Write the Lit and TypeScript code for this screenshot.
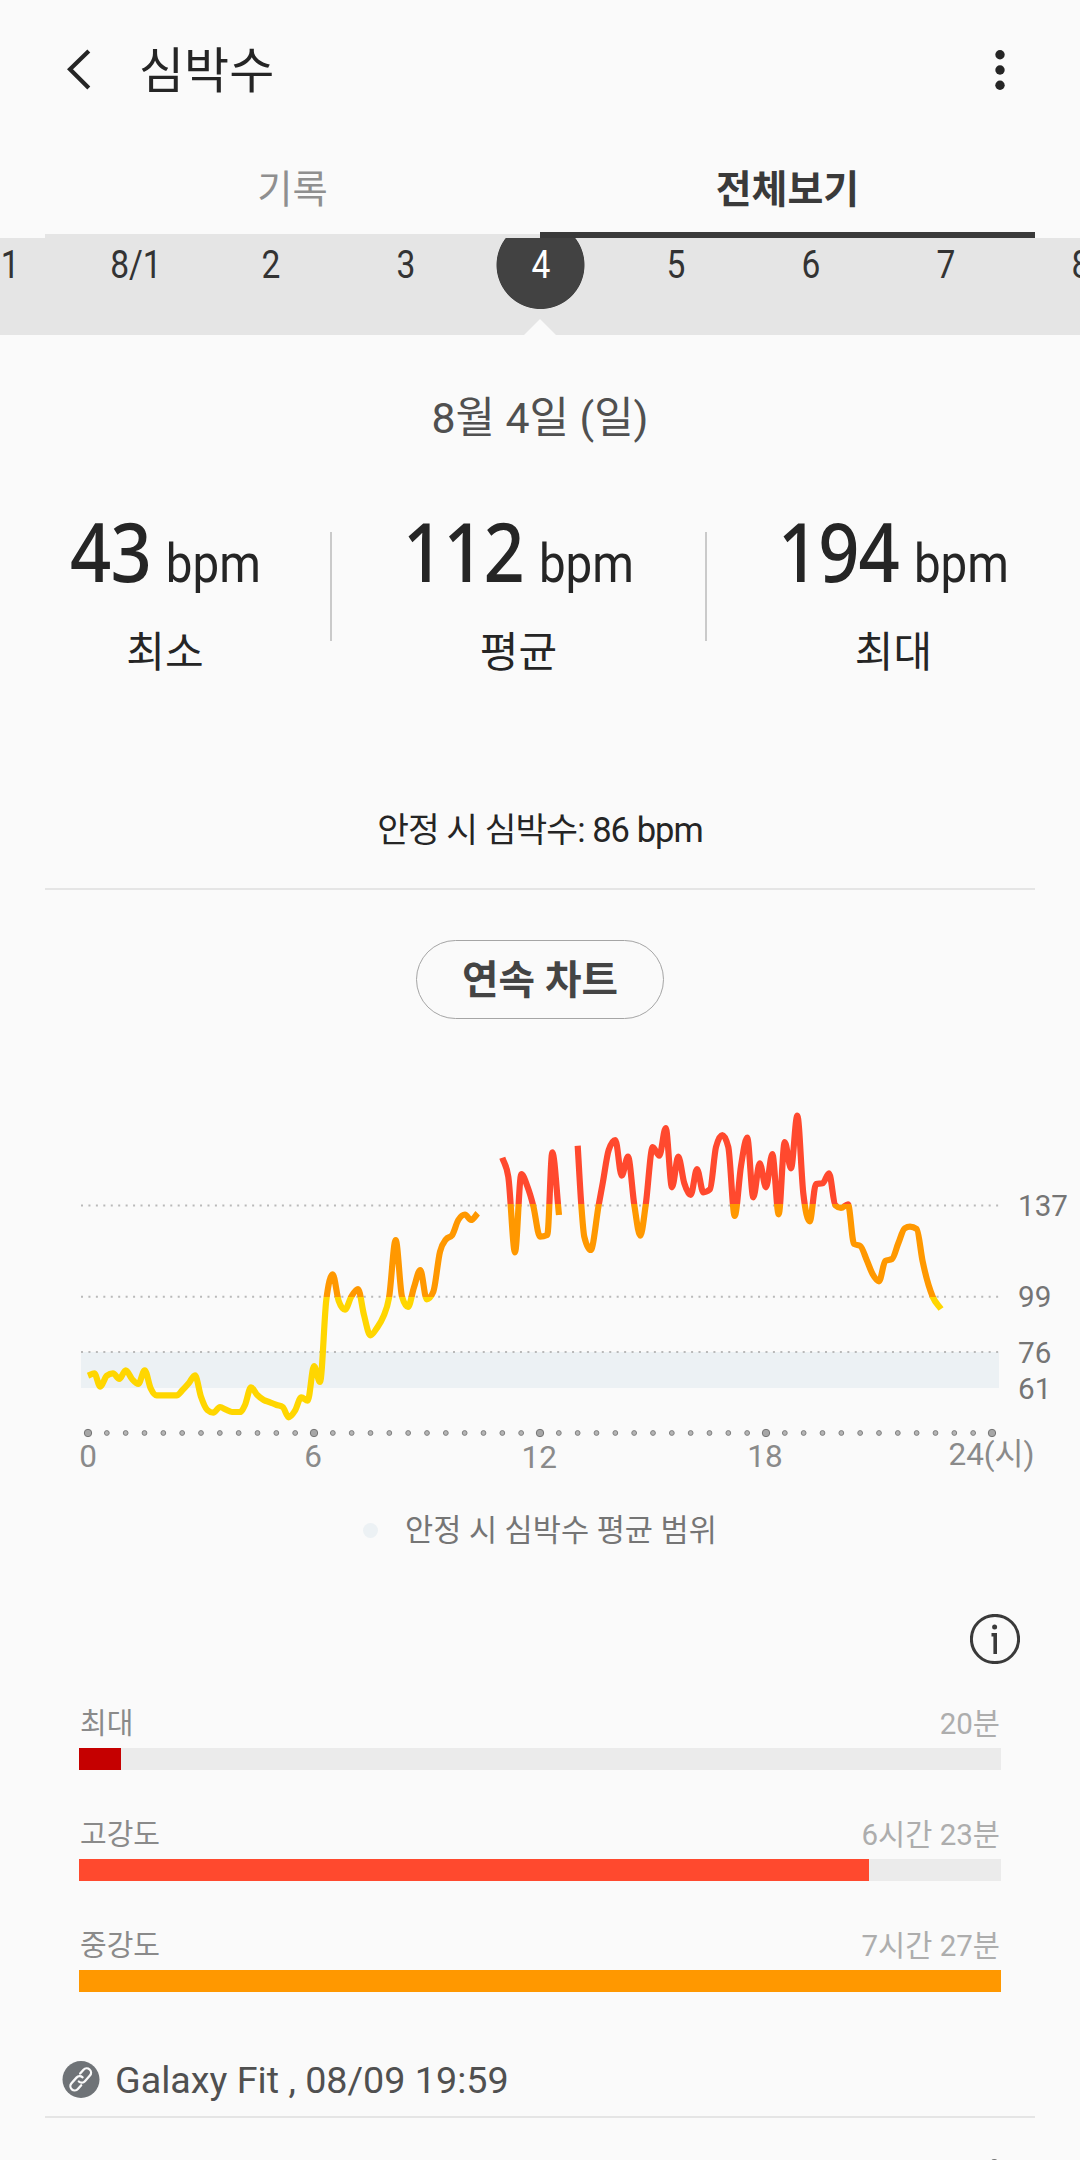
import { LitElement, html, css, svg } from "lit";
import { customElement, property } from "lit/decorators.js";
import { classMap } from "lit/directives/class-map.js";
import { styleMap } from "lit/directives/style-map.js";

type Point = [number, number];

/* Samples in chart units: x across the view, y measured down from the top of the plot. */
const NIGHT_AND_MORNING: Point[] = [
  [88, 295.7], [94.3, 293.3], [100.3, 306.7], [106.7, 295.7], [113, 293.3], [119.3, 299], [125.7, 290.3],
  [132, 299], [138.3, 304], [144.7, 290.3], [150.7, 308.3], [156.7, 315.3], [176.7, 315.3], [182.3, 310.3],
  [188.7, 303.3], [195, 295.3], [201, 316.7], [207.3, 330], [213.3, 332.7], [220, 327], [226, 329.7],
  [232, 332], [240, 332], [245, 325], [251, 307.3], [257.3, 315], [263.7, 320], [270, 322.3], [276.7, 325],
  [282.7, 327], [288.7, 337.3], [295, 330.7], [301.3, 317.3], [307.7, 320.7], [314, 286], [320, 302],
  [326.3, 220], [332.7, 194.3], [338.7, 221], [345, 229.7], [351.3, 216.7], [358, 209], [364, 235],
  [370.3, 255.3], [376.7, 248.3], [383.3, 236.7], [389, 218], [395.7, 160], [402, 216.7], [408, 227],
  [414, 207.3], [420.3, 190], [426.7, 219.3], [433.3, 211.7], [440, 171.7], [446, 159.3], [452, 155.3],
  [458.3, 140], [465, 134.5], [471, 140], [477.7, 133.3],
];
const LATE_MORNING: Point[] = [
  [502.3, 77.7], [508.3, 96.7], [515, 172.3], [521.3, 94], [527.7, 107.3], [533.3, 126], [540, 156.7],
  [547.3, 155], [552.3, 72.3], [559, 135],
];
const AFTERNOON: Point[] = [
  [577.7, 65.7], [581.3, 125], [584.3, 156.7], [590.7, 170], [598.7, 125], [602.7, 103.3], [608.7, 70],
  [615.3, 60], [621.7, 95.7], [628, 76.7], [634.3, 125], [640.3, 155.7], [645.7, 125], [652.7, 67],
  [659.3, 75.7], [665.7, 48], [672, 107.3], [678.3, 76.7], [684.3, 103.3], [690.7, 115], [697, 89],
  [703.3, 112.3], [710, 109.3], [716, 67], [722.3, 55], [728.3, 67], [734.7, 136], [741, 86], [747.2, 57.7],
  [753.3, 117.3], [759.7, 83.3], [766, 107.3], [772.3, 74], [778.7, 134.3], [784.7, 62], [791, 88.3],
  [797.3, 35.7], [803.3, 113.3], [809.7, 141.3], [816, 104], [822.7, 103.3], [829, 93.3], [835.3, 125.3],
  [841, 128], [848, 124.3], [854, 164], [860.3, 166], [866.7, 180], [872.7, 194.3], [879, 201.3],
  [885.3, 181], [892, 179], [898.3, 163.3], [904.7, 148.3], [910, 146.7], [916.7, 149], [922.7, 181.7],
  [932.7, 216.7], [941, 229],
];

/** Monotone cubic curve through the samples, so peaks and troughs never overshoot. */
function curve(p: Point[]): string {
  const n = p.length;
  const slope = p.slice(1).map((q, i) => (q[1] - p[i][1]) / (q[0] - p[i][0]));
  const tan = p.map((_, i) => {
    if (i === 0) return slope[0];
    if (i === n - 1) return slope[n - 2];
    const a = slope[i - 1];
    const b = slope[i];
    if (a * b <= 0) return 0;
    const h0 = p[i][0] - p[i - 1][0];
    const h1 = p[i + 1][0] - p[i][0];
    const m = Math.abs((a * h1 + b * h0) / (h0 + h1));
    return Math.sign(a) * Math.min(m, 2 * Math.abs(a), 2 * Math.abs(b));
  });
  let d = `M${p[0][0]} ${p[0][1]}`;
  for (let i = 1; i < n; i++) {
    const h = (p[i][0] - p[i - 1][0]) / 3;
    d += `C${(p[i - 1][0] + h).toFixed(2)} ${(p[i - 1][1] + h * tan[i - 1]).toFixed(2)} ${(p[i][0] - h).toFixed(2)} ${(p[i][1] - h * tan[i]).toFixed(2)} ${p[i][0]} ${p[i][1]}`;
  }
  return d;
}

const FONT = css`Roboto, "Noto Sans CJK KR", sans-serif`;

@customElement("heart-chart")
class HeartChart extends LitElement {
  static styles = css`
    :host { display: block; }
    .plot { display: block; width: 1080px; height: 400px; font-family: ${FONT}; }
    .grid { stroke: #b9b9b9; stroke-width: 2; stroke-dasharray: 2 5.44; }
    .level { font-size: 29.6px; fill: #757575; }
    .hour { font-size: 31.5px; fill: #8a8a8a; text-anchor: middle; }
    .trace { fill: none; stroke: url(#zones); stroke-width: 6.2; stroke-linejoin: round; }
    .tick { fill: #b4b4b4; stroke: #808080; stroke-width: 1; }
    .major { fill: #a6a6a6; stroke: #757575; }
  `;

  render() {
    const levels: [string, number][] = [["137", 136], ["99", 227], ["76", 283], ["61", 319]];
    const hours: [string, number, number][] = [
      ["0", 88, 387], ["6", 313, 387], ["12", 539.3, 387.5], ["18", 765, 387], ["24(시)", 991.5, 385],
    ];
    const ticks = Array.from({ length: 49 }, (_, i) => i);
    return html`
      <svg class="plot" viewBox="0 0 1080 400">
        <defs>
          <linearGradient id="zones" gradientUnits="userSpaceOnUse" x1="0" y1="0" x2="0" y2="400">
            <stop offset="0.31" stop-color="#ff492e" />
            <stop offset="0.31" stop-color="#ff9800" />
            <stop offset="0.5437" stop-color="#ff9800" />
            <stop offset="0.5437" stop-color="#ffd600" />
          </linearGradient>
        </defs>
        <rect x="81" y="272" width="918" height="36" fill="#ecf1f4" />
        ${[125.5, 216.7, 272].map((y) => svg`<line class="grid" x1="81" x2="999" y1=${y} y2=${y} />`)}
        ${levels.map(([t, y]) => svg`<text class="level" x="1018" y=${y}>${t}</text>`)}
        ${[NIGHT_AND_MORNING, LATE_MORNING, AFTERNOON].map((s) => svg`<path class="trace" d=${curve(s)} />`)}
        ${ticks.map((i) => svg`<circle class=${i % 12 ? "tick" : "tick major"} cx=${88 + i * 18.833} cy="353" r=${i % 12 ? 2.4 : 3.7} />`)}
        ${hours.map(([t, x, y]) => svg`<text class="hour" x=${x} y=${y}>${t}</text>`)}
      </svg>
    `;
  }
}

@customElement("zone-bar")
class ZoneBar extends LitElement {
  @property() label = "";
  @property() time = "";
  @property() color = "";
  @property({ type: Number }) percent = 0;

  static styles = css`
    :host { display: block; }
    .caption { display: flex; justify-content: space-between; height: 40px; line-height: 41px; font-size: 29px; color: #8a8a8a; padding: 0 1px; }
    .time { color: #adadad; font-size: 29.5px; line-height: 40px; }
    .track { height: 22px; margin-top: 4px; background: #ebebeb; }
    .fill { height: 22px; }
  `;

  render() {
    return html`
      <div class="caption"><span>${this.label}</span><span class="time">${this.time}</span></div>
      <div class="track">
        <div class="fill" style=${styleMap({ width: `${this.percent}%`, background: this.color })}></div>
      </div>
    `;
  }
}

@customElement("app-root")
class AppRoot extends LitElement {
  static styles = css`
    :host { display: block; width: 1080px; height: 2160px; overflow: hidden; background: #fafafa; color: #252525; font-family: ${FONT}; }
    * { box-sizing: border-box; }
    .header { display: flex; align-items: center; height: 138px; padding: 0 71px 0 60px; }
    .header svg { display: block; }
    .title { flex: 1; padding: 6px 0 0 39px; font-size: 49px; line-height: 60px; }
    .tabs { display: flex; height: 100px; margin: 0 45px; }
    .tab { flex: 1; display: flex; flex-direction: column; justify-content: space-between; padding-top: 22px; text-align: center; font-size: 38.3px; line-height: 60px; color: #8f8f8f; }
    .tab::after { content: ""; height: 4px; background: #e5e5e5; }
    .tab.active { color: #3a3a3a; font-size: 39px; font-weight: 700; }
    .tab.active::after { height: 6px; background: #3a3a3a; }
    .days { position: relative; height: 97px; background: #e5e5e5; overflow: hidden; display: flex; justify-content: center; }
    .day { flex: 0 0 135px; height: 97px; display: flex; justify-content: center; font-size: 39px; line-height: 54px; color: #333; }
    .day span { display: block; padding-left: 1px; transform: scaleX(0.86); }
    .day.current { color: #fff; background: radial-gradient(circle at 50% 27px, #424242 43.6px, transparent 44.4px); }
    .notch { position: absolute; left: 524px; bottom: 0; width: 32px; height: 16px; background: #fafafa; clip-path: polygon(50% 0, 100% 100%, 0 100%); }
    .date { margin-top: 58px; text-align: center; font-size: 42.8px; line-height: 50px; color: #505050; }
    .stats { display: grid; grid-template-columns: 330px 2px 373px 2px 1fr; height: 168px; margin-top: 67px; }
    .rule { height: 109px; margin-top: 22px; background: #cacaca; }
    .stat { display: flex; flex-direction: column; align-items: center; }
    .figure { display: flex; align-items: baseline; height: 80px; line-height: 80px; white-space: nowrap; transform: scaleX(0.88); }
    .value { font-family: "Noto Sans", sans-serif; font-size: 82px; font-weight: 500; letter-spacing: -1px; }
    .unit { margin-left: 17px; font-size: 54px; }
    .name { margin-top: 38px; font-size: 42px; line-height: 50px; }
    .resting { margin-top: 132px; text-align: center; font-size: 34.5px; line-height: 40px; letter-spacing: -0.95px; }
    .line { height: 2px; margin: 0 45px; background: #e5e5e5; }
    .resting + .line { margin-top: 38px; }
    .mode { display: block; width: 248px; height: 79px; margin: 50px auto 0; border: 1px solid #a5a5a5; border-radius: 40px; text-align: center; font-size: 39.7px; font-weight: 700; line-height: 79px; color: #444; }
    .chart { margin-top: 61px; }
    .legend { display: flex; align-items: center; height: 40px; margin-top: 30px; padding-left: 363px; font-size: 30.6px; line-height: 40px; color: #757575; }
    .legend i { width: 15px; height: 15px; margin-right: 27px; border-radius: 50%; background: #ecf1f4; }
    .legend span { padding-top: 2px; }
    .info { display: flex; justify-content: flex-end; height: 50px; margin-top: 64px; padding-right: 60px; }
    .zones { display: flex; flex-direction: column; gap: 45px; margin-top: 40px; padding: 0 79px; }
    .source { display: flex; align-items: center; height: 50px; margin-top: 63px; padding-left: 62px; gap: 15px; font-size: 37.7px; line-height: 50px; color: #505050; white-space: pre; }
    .source + .line { margin-top: 11px; }
    .next { display: block; margin: 41px 0 0 991px; }
  `;

  render() {
    const days = ["31", "8/1", "2", "3", "4", "5", "6", "7", "8"];
    const stats = [["43", "최소"], ["112", "평균"], ["194", "최대"]];
    const stat = ([value, name]: string[]) => html`
      <div class="stat">
        <div class="figure"><span class="value">${value}</span><span class="unit">bpm</span></div>
        <div class="name">${name}</div>
      </div>`;
    return html`
      <div class="header">
        <svg width="40" height="48" viewBox="60 45 40 48" fill="none" stroke="#252525" stroke-width="4.2">
          <path d="M88.8 51 70 69.3 88.8 88" />
        </svg>
        <div class="title">심박수</div>
        <svg width="18" height="48" viewBox="991 46 18 48" fill="#252525">
          <circle cx="1000" cy="55.7" r="4.7" /><circle cx="1000" cy="71" r="4.7" /><circle cx="1000" cy="86.3" r="4.7" />
        </svg>
      </div>
      <div class="tabs">
        <div class="tab">기록</div>
        <div class="tab active">전체보기</div>
      </div>
      <div class="days">
        ${days.map((d) => html`<div class=${classMap({ day: true, current: d === "4" })}><span>${d}</span></div>`)}
        <div class="notch"></div>
      </div>
      <div class="date">8월 4일 (일)</div>
      <div class="stats">
        ${stat(stats[0])}<div class="rule"></div>${stat(stats[1])}<div class="rule"></div>${stat(stats[2])}
      </div>
      <div class="resting">안정 시 심박수: 86 bpm</div>
      <div class="line"></div>
      <div class="mode">연속 차트</div>
      <heart-chart class="chart"></heart-chart>
      <div class="legend"><i></i><span>안정 시 심박수 평균 범위</span></div>
      <div class="info">
        <svg width="50" height="50" viewBox="0 0 50 50" fill="none" stroke="#3a3a3a">
          <circle cx="25" cy="25" r="23.6" stroke-width="3" />
          <circle cx="24.6" cy="13" r="2.5" fill="#3a3a3a" stroke="none" />
          <path d="M21.5 20.7H25.2V40" stroke-width="3.6" />
        </svg>
      </div>
      <div class="zones">
        <zone-bar label="최대" time="20분" color="#c50000" .percent=${4.56}></zone-bar>
        <zone-bar label="고강도" time="6시간 23분" color="#ff492e" .percent=${85.68}></zone-bar>
        <zone-bar label="중강도" time="7시간 27분" color="#ff9800" .percent=${100}></zone-bar>
      </div>
      <div class="source">
        <svg width="38" height="38" viewBox="0 0 38 38" fill="none">
          <circle cx="19" cy="18.5" r="18.5" fill="#6f7377" />
          <g transform="translate(18.7 18.4) rotate(-48)" stroke="#fafafa" stroke-width="2.3" stroke-linecap="round">
            <path d="M-4 4.3H-9A4.3 4.3 0 0 1-9-4.3H-1.5A4.3 4.3 0 0 1 2.8 0" />
            <path d="M4-4.3H9A4.3 4.3 0 0 1 9 4.3H1.5A4.3 4.3 0 0 1-2.8 0" />
          </g>
        </svg>
        <span>Galaxy Fit , 08/09 19:59</span>
      </div>
      <div class="line"></div>
      <svg class="next" width="7" height="2" viewBox="0 0 7 2"><ellipse cx="3.3" cy="2" rx="3" ry="2" fill="#757575" /></svg>
    `;
  }
}
